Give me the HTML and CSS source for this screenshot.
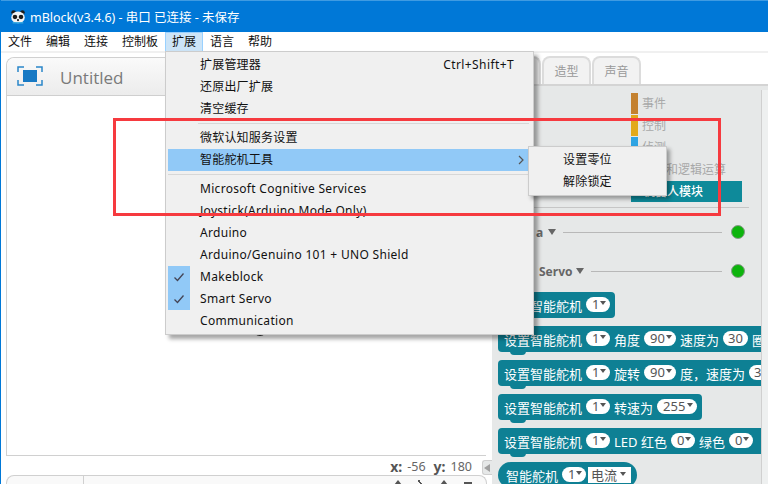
FILE: index.html
```html
<!DOCTYPE html>
<html lang="zh">
<head>
<meta charset="utf-8">
<title>mBlock</title>
<link rel="stylesheet" href="styles.css">
</head>
<body>
<div class="app">
  <header class="titlebar">
    <svg class="logo" viewBox="0 0 18 18" width="16" height="16">
      <circle cx="4" cy="4" r="2.6" fill="#1c1c1c"/><circle cx="14" cy="4" r="2.6" fill="#1c1c1c"/>
      <ellipse cx="9" cy="9.5" rx="7.6" ry="6.6" fill="#f4f4f4"/>
      <ellipse cx="5.6" cy="9" rx="2.6" ry="2.4" fill="#1c1c1c"/><ellipse cx="12.4" cy="9" rx="2.6" ry="2.4" fill="#1c1c1c"/>
      <circle cx="9" cy="12.5" r="1.2" fill="#1c1c1c"/>
      <path d="M3 15.5h12" stroke="#36a9e1" stroke-width="1.6"/>
    </svg>
    <span>mBlock(v3.4.6) - 串口 已连接 - 未保存</span>
  </header>
  <nav class="menubar">
    <span class="mi">文件</span><span class="mi">编辑</span><span class="mi">连接</span><span class="mi">控制板</span><span class="mi active">扩展</span><span class="mi">语言</span><span class="mi">帮助</span>
  </nav>
  <main class="workspace">
    <section class="left">
      <div class="stage">
        <div class="stage-head">
          <svg class="fs" viewBox="0 0 26 20" width="26" height="20">
            <rect x="6" y="4" width="14" height="12" fill="#1779c4"/>
            <path d="M1 6V1h6M19 1h6v5M25 14v5h-6M7 19H1v-5" fill="none" stroke="#2a86c9" stroke-width="1.5"/>
          </svg>
          <span class="stage-title">Untitled</span>
        </div>
        <div class="stage-body"><span class="sprite"></span></div>
      </div>
      <div class="coords"><b>x:</b><span>-56</span><b>y:</b><span>180</span></div>
      <div class="sprites">
        <div class="sp-left"></div>
        <div class="sp-right"><i class="up"></i><i class="slash"></i><i class="up"></i><i class="dash"></i></div>
      </div>
      <div class="handle"></div>
    </section>
    <section class="right">
      <div class="tabs">
        <span class="tab"></span><span class="tab">造型</span><span class="tab">声音</span>
      </div>
      <div class="panel">
        <div class="palette">
          <div class="cats">
            <div class="cat"><i class="c1"></i>事件</div>
            <div class="cat"><i class="c2"></i>控制</div>
            <div class="cat"><i class="c3"></i>侦测</div>
            <div class="cat-wide">和逻辑运算</div>
            <div class="cat-on">机器人模块</div>
          </div>
          <div class="rule"></div>
          <div class="ext ext-a"><b>a</b><em></em><span class="ln"></span><span class="dot"></span></div>
          <div class="ext ext-b"><b>Servo</b><em></em><span class="ln"></span><span class="dot"></span></div>
          <div class="blocks">
            <div class="blk hat">智能舵机<span class="ov">1<u></u></span></div>
            <div class="blk full">设置智能舵机<span class="ov">1<u></u></span>角度<span class="ov w2">90<u></u></span>速度为<span class="ov w2n">30</span>圈</div>
            <div class="blk full">设置智能舵机<span class="ov">1<u></u></span>旋转<span class="ov w2">90<u></u></span>度，速度为<span class="ov w2n">30</span></div>
            <div class="blk">设置智能舵机<span class="ov">1<u></u></span>转速为<span class="ov w3">255<u></u></span></div>
            <div class="blk full">设置智能舵机<span class="ov">1<u></u></span>LED 红色<span class="ov">0<u></u></span>绿色<span class="ov">0<u></u></span></div>
            <div class="blk rnd">智能舵机<span class="ov">1<u></u></span><span class="sq">电流<u></u></span></div>
          </div>
        </div>
        <div class="scroll"></div>
      </div>
    </section>
  </main>

  <div class="menu">
    <div class="row"><span>扩展管理器</span><kbd>Ctrl+Shift+T</kbd></div>
    <div class="row">还原出厂扩展</div>
    <div class="row">清空缓存</div>
    <div class="sep sep-a"></div>
    <div class="row">微软认知服务设置</div>
    <div class="row hi">智能舵机工具
      <svg class="chev" viewBox="0 0 6 10" width="6" height="10"><path d="M1 1l4 4-4 4" fill="none" stroke="#555" stroke-width="1.2"/></svg>
    </div>
    <div class="sep sep-b"></div>
    <div class="row lat">Microsoft Cognitive Services</div>
    <div class="row lat">Joystick(Arduino Mode Only)</div>
    <div class="row lat">Arduino</div>
    <div class="row lat">Arduino/Genuino 101 + UNO Shield</div>
    <div class="row lat on"><svg class="chk" viewBox="0 0 12 10" width="12" height="10"><path d="M1.5 5.5l3 3 6-7" fill="none" stroke="#445" stroke-width="1.3"/></svg>Makeblock</div>
    <div class="row lat on"><svg class="chk" viewBox="0 0 12 10" width="12" height="10"><path d="M1.5 5.5l3 3 6-7" fill="none" stroke="#445" stroke-width="1.3"/></svg>Smart Servo</div>
    <div class="row lat">Communication</div>
  </div>
  <div class="submenu">
    <div class="row">设置零位</div>
    <div class="row">解除锁定</div>
  </div>
  <div class="redbox"></div>
</div>
</body>
</html>
```
FILE: styles.css
```css
* { box-sizing: border-box; }
html, body { margin: 0; padding: 0; }
body { width: 768px; height: 484px; overflow: hidden; background: #fff; font-family: "Noto Sans", "Noto Sans CJK SC", sans-serif; font-size: 12px; color: #111; }
.app { position: relative; width: 768px; height: 484px; overflow: hidden; display: flex; flex-direction: column; border-left: 1px solid #0078d7; }

.titlebar { height: 32px; flex: none; margin-left: -1px; background: #0078d7; border-top: 1px solid #3f9be2; color: #fff; display: flex; align-items: center; padding-left: 10px; gap: 4px; font-size: 12.5px; }
.logo { flex: none; }

.menubar { height: 19px; flex: none; display: flex; background: #fff; }
.mi { height: 19px; line-height: 20px; padding: 0 7px; font-size: 12px; }
.active { background: #cce4f7; border: 1px solid #99d1ff; border-bottom: 0; padding: 0 6px; line-height: 18px; }

.workspace { flex: 1; display: flex; border-top: 2px solid #f0f0f0; min-height: 0; }

.left { position: relative; width: 491px; flex: none; padding-left: 5px; padding-top: 4px; display: flex; flex-direction: column; }
.stage { width: 480px; height: 399px; flex: none; border: 1px solid #d0d0d0; border-top-left-radius: 8px; display: flex; flex-direction: column; border-right: 0; }
.stage-head { height: 38px; flex: none; display: flex; align-items: center; padding-left: 10px; gap: 17px; background: linear-gradient(#fafafa, #ececec); border-bottom: 1px solid #cfcfcf; border-top-left-radius: 8px; }
.fs { margin-top: -2px; }
.stage-title { font-family: "Open Sans", sans-serif; font-size: 17px; color: #7a7a7a; padding-top: 2px; }
.stage-body { flex: 1; position: relative; }
.sprite { position: absolute; left: 246px; top: 232px; width: 14px; height: 8px; background: #333; border-radius: 0 0 7px 7px; }
.coords { height: 19px; flex: none; display: flex; justify-content: flex-end; align-items: center; padding: 2px 20px 0 0; font-size: 12.5px; color: #666; }
.coords b { font-size: 14px; color: #555; margin: 0 5px 0 8px; }
.sprites { flex: 1; width: 481px; display: flex; border: 1px solid #d0d0d0; border-bottom: 0; border-radius: 8px 8px 0 0; background: #f9f9f9; }
.sp-left { width: 77px; border-right: 1px solid #d0d0d0; }
.sp-right { flex: 1; display: flex; justify-content: flex-end; padding: 4px 14px 0 0; gap: 16px; }
.up { width: 0; height: 0; border: 4px solid transparent; border-top: 0; border-bottom: 5px solid #555; }
.slash { width: 6px; height: 7px; background: linear-gradient(to top left, transparent 40%, #555 40%, #555 60%, transparent 60%); transform: scaleX(-1); }
.dash { width: 8px; height: 2px; margin-top: 2px; background: #555; }
.handle { position: absolute; left: 481px; top: 407px; width: 10px; height: 15px; background: #e6e8e8; border: 1px solid #cfcfcf; border-right: 0; border-radius: 3px 0 0 3px; }
.handle::after { content: ""; position: absolute; left: 1px; top: 3px; border: 4px solid transparent; border-left: 0; border-right: 6px solid #a0a0a0; }

.right { flex: 1; display: flex; flex-direction: column; min-width: 0; }
.tabs { height: 31px; flex: none; display: flex; gap: 1px; align-items: flex-end; }
.tab { width: 49px; height: 28px; text-align: center; line-height: 28px; font-size: 12px; color: #999; background: #f2f2f2; border: 2px solid #dcdcdc; border-bottom: 0; border-radius: 8px 8px 0 0; }
.panel { flex: 1; display: flex; background: #e6e8e8; border-top: 2px solid #d4d4d4; min-height: 0; }
.palette { width: 269px; flex: none; overflow: hidden; padding-top: 7px; }
.scroll { flex: 1; margin-top: 4px; background: #eef0f0; border-left: 1px solid #d0d0d0; }

.cats { margin-left: 139px; height: 109px; }
.cat { height: 22px; line-height: 22px; display: flex; align-items: flex-start; gap: 4px; color: #a8a8a8; font-size: 12px; }
.cat i { width: 7px; height: 21px; }
.c1 { background: #c4812f; }
.c2 { background: #e2a91b; }
.c3 { background: #2fa4e3; }
.cat-wide { height: 22px; line-height: 21px; text-align: right; padding-right: 35px; color: #a8a8a8; font-size: 12px; }
.cat-on { width: 111px; height: 21px; line-height: 21px; background: #0e8a9a; color: #fff; padding-left: 12px; font-size: 12px; font-weight: 500; }
.rule { height: 1px; margin: 5px 12px 0 42px; background: #c6c6c6; }

.ext { height: 16px; display: flex; align-items: center; color: #666; font-size: 12px; padding-right: 16px; }
.ext em { width: 0; height: 0; margin: 0 7px 0 3px; border: 4px solid transparent; border-top: 6px solid #666; border-bottom: 0; }
.ext .ln { flex: 1; height: 1px; background: #b8b8b8; margin-right: 9px; }
.dot { width: 14px; height: 14px; border-radius: 50%; background: #0db40d; border: 1px solid #8a9a8a; }
.ext-a { margin-top: 16px; padding-left: 44px; }
.ext-a em { margin-left: 5px; }
.ext-b { margin-top: 23px; padding-left: 47px; }

.blocks { display: flex; flex-direction: column; align-items: flex-start; gap: 8px; margin-top: 13px; padding-left: 6px; width: 400px; }
.blk { position: relative; height: 26px; display: inline-flex; align-items: center; gap: 4px; white-space: nowrap; padding: 0 5px 0 6px; background: #0e8094; border-radius: 4px; color: #fff; font-size: 13px; }
.blk::after { content: ""; position: absolute; left: 12px; bottom: -3px; width: 16px; height: 4px; background: #0e8094; border-radius: 0 0 5px 5px; }
.hat { width: 117px; justify-content: flex-end; }
.full { width: 400px; }
.rnd { border-radius: 13px; padding: 0 6px 0 8px; }
.rnd::after { display: none; }
.ov { position: relative; display: inline-block; flex: none; width: 24px; height: 15px; line-height: 15px; margin-top: -1px; background: #fff; color: #555; border-radius: 8px; padding-left: 6px; font-size: 13px; }
.ov u { position: absolute; right: 4px; top: 4px; width: 0; height: 0; border: 3.5px solid transparent; border-top: 4px solid #555; border-bottom: 0; }
.w2 { width: 32px; }
.w2n { width: 25px; padding-left: 5px; }
.w3 { width: 40px; }
.sq { position: relative; display: inline-block; width: 43px; height: 16px; margin-left: -2px; line-height: 16px; background: #fff; color: #555; padding-left: 3px; }
.sq u { position: absolute; right: 5px; top: 5px; width: 0; height: 0; border: 3.5px solid transparent; border-top: 4px solid #555; border-bottom: 0; }

.menu { position: absolute; left: 164px; top: 51px; width: 369px; height: 284px; padding: 2px 2px 0; background: #f0f0f0; border: 1px solid #ccc; box-shadow: 4px 4px 4px rgba(0,0,0,.35); }
.row { position: relative; height: 22px; line-height: 22px; padding-left: 32px; display: flex; justify-content: space-between; color: #111; font-size: 12px; letter-spacing: .2px; }
.lat { letter-spacing: .3px; }
.row kbd { font: inherit; letter-spacing: .4px; margin-right: 17px; }
.sep { margin-left: 30px; background: #d7d7d7; height: 1px; }
.sep-a { margin-top: 3px; margin-bottom: 3px; margin-right: 2px; }
.sep-b { margin-top: 3px; margin-bottom: 3px; margin-left: 0; }
.hi { background: #91c9f7; }
.chev { position: absolute; right: 7px; top: 6px; }
.on::before { content: ""; position: absolute; left: 0; top: 0; width: 22px; height: 22px; background: #91c9f7; }
.chk { position: absolute; left: 5px; top: 6px; z-index: 1; }

.submenu { position: absolute; left: 527px; top: 146px; width: 139px; height: 50px; padding: 2px 0; background: #f0f0f0; border: 1px solid #ccc; box-shadow: 3px 3px 4px rgba(0,0,0,.35); }
.submenu .row { padding-left: 34px; }

.redbox { position: absolute; left: 112px; top: 118px; width: 608px; height: 98px; border: 3px solid #f63a3f; pointer-events: none; }
```
